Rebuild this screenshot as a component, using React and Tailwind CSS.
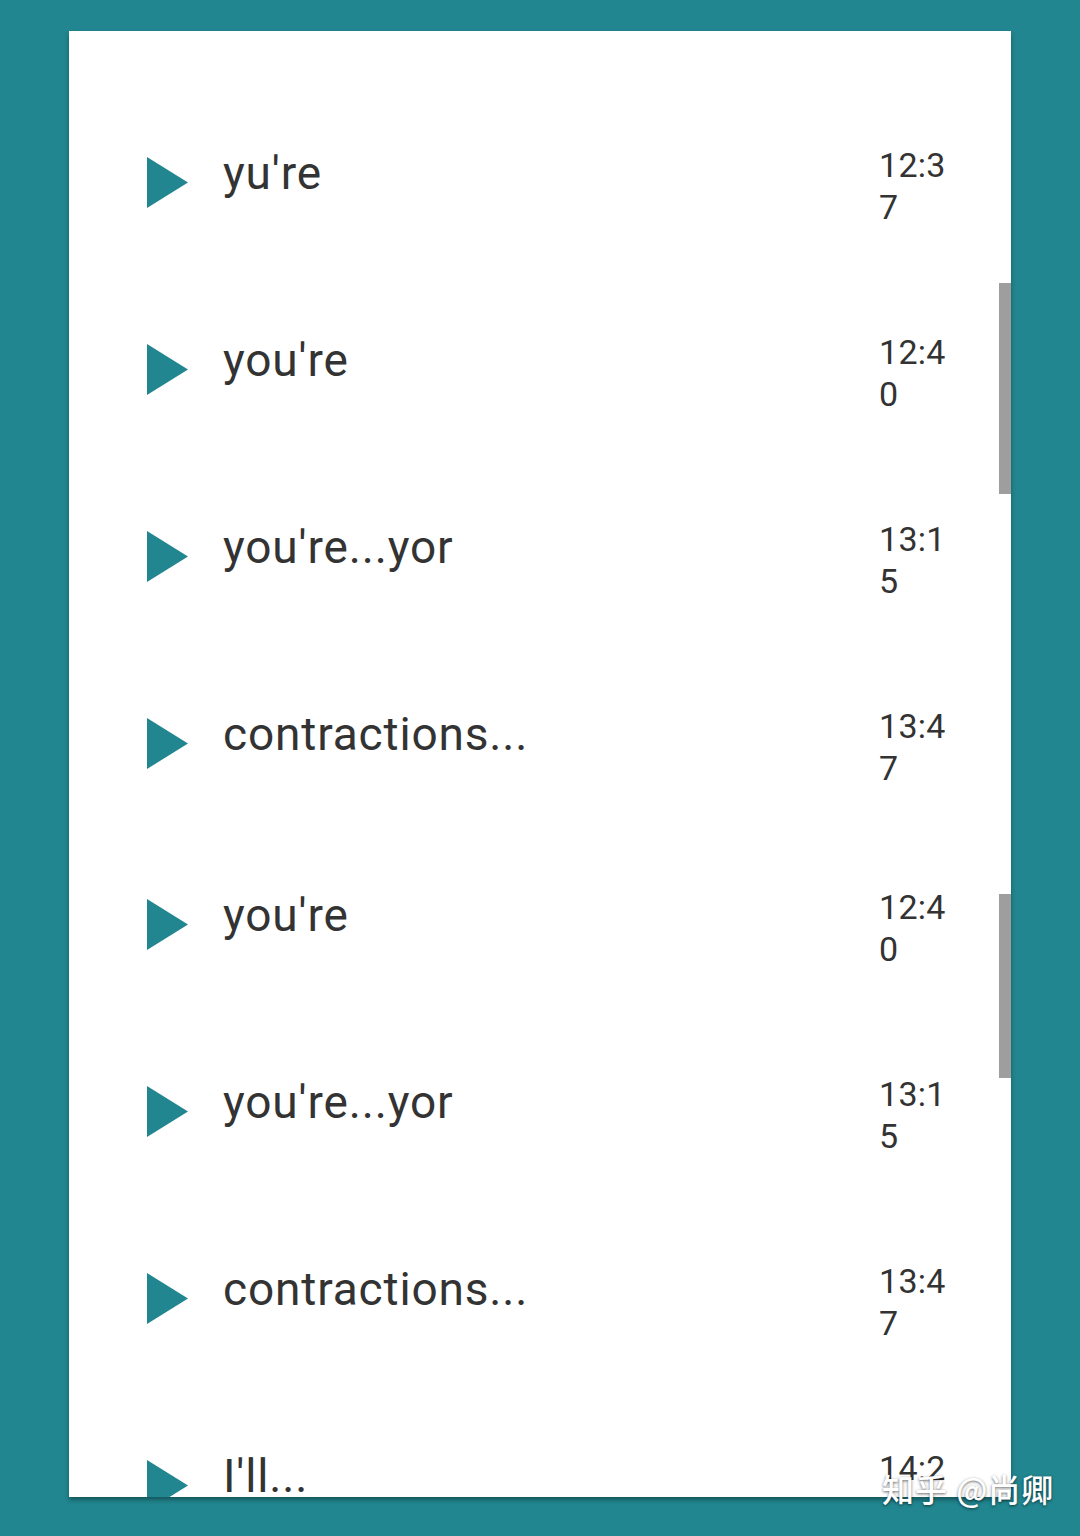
import React from "react";

const rows = [
  { label: "yu're", time: "12:37", h: "h-[187px]" },
  { label: "you're", time: "12:40", h: "h-[187px]" },
  { label: "you're...yor", time: "13:15", h: "h-[187px]" },
  { label: "contractions...", time: "13:47", h: "h-[181px]" },
  { label: "you're", time: "12:40", h: "h-[187px]" },
  { label: "you're...yor", time: "13:15", h: "h-[187px]" },
  { label: "contractions...", time: "13:47", h: "h-[187px]" },
  { label: "I'll...", time: "14:25", h: "h-[187px]" },
];

function Play() {
  return (
    <svg width="41" height="51" viewBox="0 0 41 51" className="block shrink-0 mt-[68px]">
      <polygon points="0,0 41,25.5 0,51" fill="#21868f" />
    </svg>
  );
}

function Row({ label, time, h }) {
  return (
    <div className={`flex items-start shrink-0 pl-[78px] ${h}`}>
      <Play />
      <div className="flex-1 ml-[35px] mt-[61px] text-[46px] leading-[46px] tracking-[0.85px] text-[#333333] whitespace-nowrap">
        {label}
      </div>
      <div className="w-[72px] mr-[60px] mt-[55px] text-[34px] leading-[42px] tracking-[0.3px] text-[#333333] break-all">
        {time}
      </div>
    </div>
  );
}

export default function App() {
  return (
    <div
      className="relative w-[1080px] h-[1536px] bg-[#21868f] pt-[31px] pl-[69px] overflow-hidden"
      style={{ fontFamily: "Roboto, 'Noto Sans CJK SC', sans-serif" }}
    >
      <div className="relative w-[942px] h-[1466px] bg-white overflow-hidden shadow-[0_3px_4px_rgba(0,0,0,0.35)]">
        <div className="flex flex-col pt-[58px]">
          {rows.map((r, i) => (
            <Row key={i} {...r} />
          ))}
        </div>
        <div className="absolute right-0 top-[252px] w-[12px] h-[211px] bg-[#9e9e9e]" />
        <div className="absolute right-0 top-[863px] w-[12px] h-[184px] bg-[#9e9e9e]" />
      </div>
      <div className="absolute left-[882px] top-[1469px] text-[32px] leading-[38px] tracking-[1px] font-medium text-white whitespace-nowrap [text-shadow:0_1px_3px_rgba(0,0,0,0.6)]" style={{ fontFamily: "'Noto Sans CJK SC', sans-serif" }}>
        知乎 @尚卿
      </div>
    </div>
  );
}
